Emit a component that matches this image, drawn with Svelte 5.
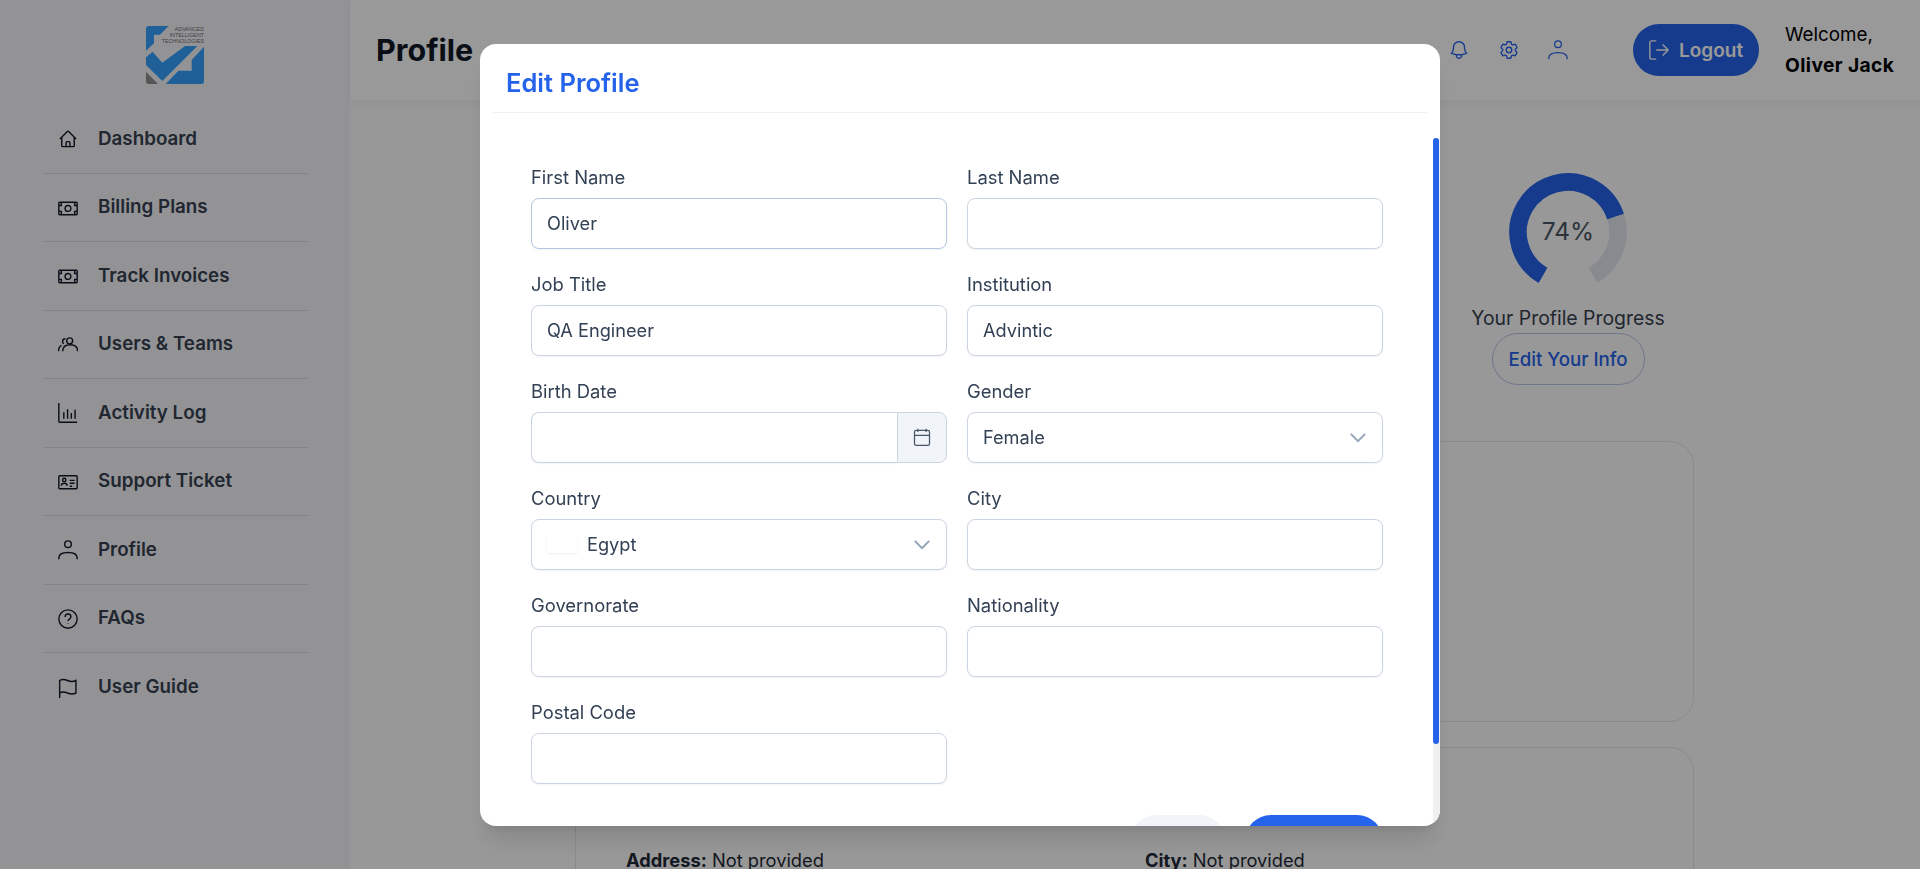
<script>
	const nav = [
		{ label: 'Dashboard', d: 'M2.25 12l8.95-8.95c.44-.44 1.15-.44 1.6 0L21.75 12M4.5 9.75V20c0 .6.5 1.1 1.1 1.1h4.1v-4.9c0-.6.5-1.1 1.1-1.1h2.4c.6 0 1.1.5 1.1 1.1v4.9h4.1c.6 0 1.1-.5 1.1-1.1V9.75M8 21.1h8' },
		{ label: 'Billing Plans', d: 'M2 5h20c.6 0 1 .4 1 1v13c0 .6-.4 1-1 1H2c-.6 0-1-.4-1-1V6c0-.6.4-1 1-1zM15.5 12.5a3.5 3.5 0 1 1-7 0 3.5 3.5 0 0 1 7 0zM1 9h3V5M23 9h-3V5M1 16h3v4M23 16h-3v4' },
		{ label: 'Track Invoices', d: 'M2 5h20c.6 0 1 .4 1 1v13c0 .6-.4 1-1 1H2c-.6 0-1-.4-1-1V6c0-.6.4-1 1-1zM15.5 12.5a3.5 3.5 0 1 1-7 0 3.5 3.5 0 0 1 7 0zM1 9h3V5M23 9h-3V5M1 16h3v4M23 16h-3v4' },
		{ label: 'Users & Teams', d: 'M17.600 7a3.600 3.600 0 1 1-7.200 0 3.600 3.600 0 0 1 7.200 0zM5.600 19.600c0-5 3.500-8 9-8s9 3 9 8M9 4.500C7 4.500 5.500 6 5.500 7.800c0 1.200.6 2.200 1.500 2.700M.6 19.600c0-3.600 1-6 3.500-7.200' },
		{ label: 'Activity Log', d: 'M1 0v22c0 .6.4 1 1 1h21M7 11v8M11.500 7.500V19M16 12v7M20.500 8v11' },
		{ label: 'Support Ticket', d: 'M2 4.500h20c.6 0 1 .4 1 1v13.500c0 .6-.4 1-1 1H2c-.6 0-1-.4-1-1V5.500c0-.6.4-1 1-1zM9.500 9.500a2 2 0 1 1-4 0 2 2 0 0 1 4 0zM4 16.500c0-2 1.500-3 3.500-3s3.500 1 3.500 3M14 10h6M14 13.500h6M14 17h3' },
		{ label: 'Profile', d: 'M16 5a4 4 0 1 1-8 0 4 4 0 0 1 8 0zM1 23v-1.500C1 17 5 15 12 15s11 2 11 6.500V23' },
		{ label: 'FAQs', d: 'M23 12a11 11 0 1 1-22 0 11 11 0 0 1 22 0zM8.500 9.500C8.500 7.500 10 6 12 6s3.500 1.300 3.500 3.200c0 2.800-3.500 3-3.500 5.300M12 17.500v.5' },
		{ label: 'User Guide', d: 'M2 24V2.500M2 3c3-2 6-1.500 9.500 0s7 1.500 10 0v15c-3 1.500-6.500 1.500-10 0S5 16 2 18' }
	]

	const fields = [
		{ label: 'First Name', value: 'Oliver', active: true },
		{ label: 'Last Name', value: '' },
		{ label: 'Job Title', value: 'QA Engineer' },
		{ label: 'Institution', value: 'Advintic' },
		{ label: 'Birth Date', type: 'date' },
		{ label: 'Gender', type: 'select', value: 'Female' },
		{ label: 'Country', type: 'country', value: 'Egypt' },
		{ label: 'City', value: '' },
		{ label: 'Governorate', value: '' },
		{ label: 'Nationality', value: '' },
		{ label: 'Postal Code', value: '' }
	]
</script>

<div class="page">
	<aside class="sidebar">
		<div class="logo">
			<svg viewBox="0 0 174 174" width="58" height="58">
				<path class="l-blue" d="M8 0H68L42 26H24V52L0 74V8Q0 0 8 0Z" />
				<path class="l-blue" d="M0 94L20 77L49 110L117 60H154L49 165L0 117Z" />
				<path class="l-blue" d="M174 62V166Q174 174 166 174H59L97 134H137V102Z" />
				<path class="l-grey" d="M0 137L36 174H8Q0 174 0 166Z" />
				<text x="174" y="14" text-anchor="end">ADVANCED</text>
				<text x="174" y="32" text-anchor="end">INTELLIGENT</text>
				<text x="174" y="50" text-anchor="end">TECHNOLOGIES</text>
			</svg>
		</div>
		<nav>
			{#each nav as item}
				<a class="nav-item" href="#top">
					<svg viewBox="0 0 24 24" width="20" height="20"><path d={item.d} /></svg>
					<span>{item.label}</span>
				</a>
			{/each}
		</nav>
	</aside>

	<main>
		<header>
			<h1>Profile</h1>
			<div class="top-icons">
				<svg viewBox="0 0 24 24" width="22" height="22"><path d="M14.860 17.080a23.850 23.850 0 0 0 5.450-1.310A8.970 8.970 0 0 1 18 9.750V9A6 6 0 0 0 6 9v.75a8.970 8.970 0 0 1-2.310 6.020c1.730.64 3.560 1.090 5.450 1.310m5.720 0a24.260 24.260 0 0 1-5.720 0m5.720 0a3 3 0 1 1-5.720 0" /></svg>
				<svg viewBox="0 0 24 24" width="22" height="22"><path d="M9.594 3.940c.09-.542.56-.94 1.110-.94h2.593c.55 0 1.020.398 1.110.94l.213 1.281c.063.374.313.686.645.87.074.04.147.083.22.127.325.196.72.257 1.075.124l1.217-.456a1.125 1.125 0 0 1 1.370.49l1.296 2.247a1.125 1.125 0 0 1-.26 1.431l-1.003.827c-.293.241-.438.613-.43.992a7.723 7.723 0 0 1 0 .255c-.008.378.137.75.43.991l1.004.827c.424.35.534.955.26 1.430l-1.298 2.247a1.125 1.125 0 0 1-1.369.491l-1.217-.456c-.355-.133-.75-.072-1.076.124a6.470 6.470 0 0 1-.22.128c-.331.183-.581.495-.644.869l-.213 1.281c-.09.543-.56.94-1.110.94h-2.594c-.55 0-1.019-.398-1.110-.94l-.213-1.281c-.062-.374-.312-.686-.644-.87a6.520 6.520 0 0 1-.22-.127c-.325-.196-.72-.257-1.076-.124l-1.217.456a1.125 1.125 0 0 1-1.369-.49l-1.297-2.247a1.125 1.125 0 0 1 .26-1.431l1.004-.827c.292-.24.437-.613.43-.991a6.932 6.932 0 0 1 0-.255c.007-.38-.138-.751-.43-.992l-1.004-.827a1.125 1.125 0 0 1-.26-1.430l1.297-2.247a1.125 1.125 0 0 1 1.370-.491l1.216.456c.356.133.751.072 1.076-.124.072-.044.146-.086.22-.128.332-.183.582-.495.644-.869l.214-1.280ZM15 12a3 3 0 1 1-6 0 3 3 0 0 1 6 0Z" /></svg>
				<svg viewBox="0 0 24 24" width="20" height="20"><path d="M16 5a4 4 0 1 1-8 0 4 4 0 0 1 8 0zM1 23v-1.500C1 17 5 15 12 15s11 2 11 6.500V23" /></svg>
			</div>
			<button class="logout">
				<svg viewBox="0 0 24 24" width="22" height="22"><path d="M9 2H4C2.900 2 2 2.900 2 4v16c0 1.100.9 2 2 2h5M9 12h13M16 6l6 6-6 6" /></svg>
				Logout
			</button>
			<div class="welcome">Welcome,<strong>Oliver Jack</strong></div>
		</header>

		<div class="content">
			<div class="progress">
				<svg viewBox="0 0 120 120" width="120" height="120">
					<circle class="track" cx="60" cy="60" r="50" pathLength="360" stroke-dasharray="300 60" transform="rotate(120 60 60)" />
					<circle class="bar" cx="60" cy="60" r="50" pathLength="360" stroke-dasharray="222 138" transform="rotate(120 60 60)" />
					<text x="60" y="68" text-anchor="middle">74%</text>
				</svg>
				<p>Your Profile Progress</p>
				<button class="edit-info">Edit Your Info</button>
			</div>
			<section class="card short"></section>
			<section class="card">
				<div class="details">
					<span><b>Address:</b> Not provided</span>
					<span><b>City:</b> Not provided</span>
				</div>
			</section>
		</div>
	</main>

	<div class="backdrop"></div>

	<div class="modal">
		<div class="modal-head">
			<h2>Edit Profile</h2>
		</div>
		<div class="modal-body">
			<form class="form">
				{#each fields as f}
					<div class="field">
						<label for={f.label}>{f.label}</label>
						{#if f.type === 'date'}
							<div class="date-group">
								<input id={f.label} />
								<span class="addon">
									<svg viewBox="0 0 24 24" width="20" height="20"><path d="M7 2v4M17 2v4M3 10h18M5 4h14c1.100 0 2 .9 2 2v14c0 1.100-.9 2-2 2H5c-1.100 0-2-.9-2-2V6c0-1.100.9-2 2-2z" /></svg>
								</span>
							</div>
						{:else if f.type === 'select' || f.type === 'country'}
							<div class="select" class:country={f.type === 'country'}>
								{#if f.type === 'country'}<span class="flag"></span>{/if}
								<span id={f.label}>{f.value}</span>
								<svg viewBox="0 0 20 12" width="18" height="11"><path d="M2 2l8 8 8-8" /></svg>
							</div>
						{:else}
							<input id={f.label} class:active={f.active} value={f.value} />
						{/if}
					</div>
				{/each}
			</form>
			<!-- labels sit below the fold of the modal body -->
			<div class="actions">
				<button class="close" aria-label="Close"></button>
				<button class="save" aria-label="Save"></button>
			</div>
		</div>
		<div class="scrollbar"><div class="thumb"></div></div>
	</div>
</div>

<style>
	:global(body) {
		margin: 0;
		overflow: hidden;
		font-family: Inter, "Noto Sans", sans-serif;
	}
	.page {
		display: flex;
		height: 869px;
		overflow: hidden;
		background: #fefefe;
	}

	.sidebar {
		width: 350px;
		flex: none;
		background: #f5f6fb;
		padding: 0 42px 0 43px;
		box-sizing: border-box;
	}
	.logo {
		height: 105px;
		padding: 26px 2px 0 0;
		box-sizing: border-box;
		display: flex;
		justify-content: center;
	}
	.logo .l-blue { fill: #34a0ff; }
	.logo .l-grey { fill: #8f8f8f; }
	.logo text {
		font-size: 16px;
		fill: #6b6b6b;
		font-family: "Liberation Sans", sans-serif;
	}
	.nav-item {
		display: flex;
		align-items: center;
		gap: 20px;
		height: 68.500px;
		padding: 0 15px;
		box-sizing: border-box;
		border-bottom: 1px solid #dadce3;
		color: #374151;
		font-size: 18.800px;
		font-weight: 600;
		text-decoration: none;
	}
	.nav-item:last-child { border-bottom: none; }
	.nav-item svg {
		flex: none;
		fill: none;
		stroke: #111827;
		stroke-width: 1.700;
		margin-top: 1px;
	}
	.nav-item span { margin-top: -1px; }

	main {
		flex: 1;
		min-width: 0;
	}
	header {
		height: 100px;
		display: flex;
		align-items: center;
		padding: 0 26px;
		background: #fff;
		box-shadow: 0 4px 10px rgba(0, 0, 0, 0.05);
		position: relative;
		color: #000;
	}
	h1 {
		margin: -2px 0 0;
		font-size: 30.500px;
		font-weight: 700;
		color: #111827;
	}
	.top-icons {
		margin-left: auto;
		display: flex;
		align-items: center;
		gap: 28px;
	}
	.top-icons svg {
		fill: none;
		stroke: #2563eb;
		stroke-width: 1.500;
	}
	.logout {
		display: flex;
		align-items: center;
		gap: 9px;
		height: 52px;
		width: 126px;
		margin-left: 65px;
		padding: 0 0 0 15px;
		border: none;
		border-radius: 26px;
		background: #2563eb;
		color: #fff;
		font: 600 19px Inter, sans-serif;
	}
	.logout svg {
		fill: none;
		stroke: #fff;
		stroke-width: 1.500;
		flex: none;
	}
	.welcome {
		margin-left: 26px;
		width: 109px;
		font-size: 18.800px;
		line-height: 30px;
		color: #000;
		white-space: nowrap;
	}
	.welcome strong {
		display: block;
		font-size: 19.200px;
		font-weight: 700;
		letter-spacing: 0.4px;
	}

	.content {
		padding: 72px 226px 0 225px;
	}
	.progress {
		margin: 0 1px 0 auto;
		width: 250px;
		display: flex;
		flex-direction: column;
		align-items: center;
		color: #374151;
	}
	.progress svg { display: block; }
	.track, .bar {
		fill: none;
		stroke-width: 17.500;
	}
	.track { stroke: #e2e8f0; }
	.bar { stroke: #2563eb; }
	.progress text {
		font: 400 24.500px Inter, sans-serif;
		fill: #4b5563;
	}
	.progress p {
		margin: 12px 0 0;
		font-size: 19.400px;
		line-height: 28px;
	}
	.edit-info {
		margin-top: 1px;
		width: 153px;
		height: 52px;
		border: 1px solid #b7c6e8;
		border-radius: 26px;
		background: none;
		color: #2563eb;
		font: 500 18.700px Inter, sans-serif;
	}
	.card {
		margin-top: 25px;
		border: 1px solid #e5e7eb;
		border-radius: 24px;
		height: 281px;
		box-sizing: border-box;
	}
	.card.short { margin-top: 56px; }
	.details {
		display: grid;
		grid-template-columns: 519px 1fr;
		padding: 101px 50px 0;
		font-size: 18.300px;
		color: #1f2937;
	}

	.backdrop {
		position: fixed;
		inset: 0;
		background: rgba(0, 0, 0, 0.4);
	}
	.modal {
		position: fixed;
		left: 480px;
		top: 43.500px;
		width: 960px;
		height: 782px;
		display: flex;
		flex-direction: column;
		background: #fff;
		border-radius: 16px;
		box-shadow: 0 20px 25px -5px rgba(0, 0, 0, 0.1), 0 8px 10px -6px rgba(0, 0, 0, 0.1);
		overflow: hidden;
	}
	.modal-head {
		height: 69px;
		margin: 0 13px 25px;
		padding: 10px 13px 0;
		box-sizing: border-box;
		display: flex;
		align-items: center;
		border-bottom: 1px solid #f1f1f3;
		flex: none;
	}
	h2 {
		margin: 0;
		font-size: 25.500px;
		font-weight: 600;
		color: #2563eb;
	}
	.modal-body {
		flex: 1;
		min-height: 0;
		overflow: hidden;
		padding: 26px 57px 50px 51px;
		box-sizing: border-box;
	}
	.scrollbar {
		position: absolute;
		top: 94.500px;
		right: 0;
		bottom: 0;
		width: 7px;
		background: #f0f0f1;
	}
	.thumb {
		width: 6px;
		height: 606px;
		background: #2563eb;
		border-radius: 3px;
	}
	.form {
		display: grid;
		grid-template-columns: 416px 416px;
		column-gap: 20px;
		row-gap: 22px;
	}
	label {
		display: block;
		margin-bottom: 7px;
		font-size: 18.400px;
		line-height: 27px;
		color: #334155;
	}
	input, .select {
		display: block;
		width: 100%;
		height: 51px;
		box-sizing: border-box;
		padding: 0 15px;
		border: 1px solid #cbd5e1;
		border-radius: 8px;
		background: #fff;
		box-shadow: 0 1px 2px rgba(0, 0, 0, 0.05);
		font: 400 18.200px Inter, sans-serif;
		color: #334155;
		outline: none;
	}
	input.active { border-color: #b4c7e2; }
	.date-group { display: flex; }
	.date-group input {
		border-radius: 8px 0 0 8px;
		border-right: none;
		flex: 1;
		min-width: 0;
	}
	.addon {
		width: 50px;
		flex: none;
		display: flex;
		align-items: center;
		justify-content: center;
		box-sizing: border-box;
		border: 1px solid #cbd5e1;
		border-radius: 0 8px 8px 0;
		background: #f1f5f9;
	}
	.addon svg {
		fill: none;
		stroke: #475569;
		stroke-width: 1.500;
	}
	.select {
		display: flex;
		align-items: center;
	}
	.select svg {
		margin-left: auto;
		fill: none;
		stroke: #94a3b8;
		stroke-width: 2.200;
	}
	.flag {
		width: 30px;
		height: 18px;
		margin-right: 10px;
		border-radius: 2px;
		background: #fff;
		box-shadow: 0 1px 2px rgba(0, 0, 0, 0.08);
	}
	.actions {
		display: flex;
		justify-content: flex-end;
		gap: 20px;
		margin-top: 31px;
		width: 852px;
	}
	.actions button {
		height: 52px;
		border: none;
		border-radius: 26px;
	}
	.close {
		width: 95px;
		background: #f1f5f9;
	}
	.save {
		width: 138px;
		background: #2563eb;
	}
</style>
